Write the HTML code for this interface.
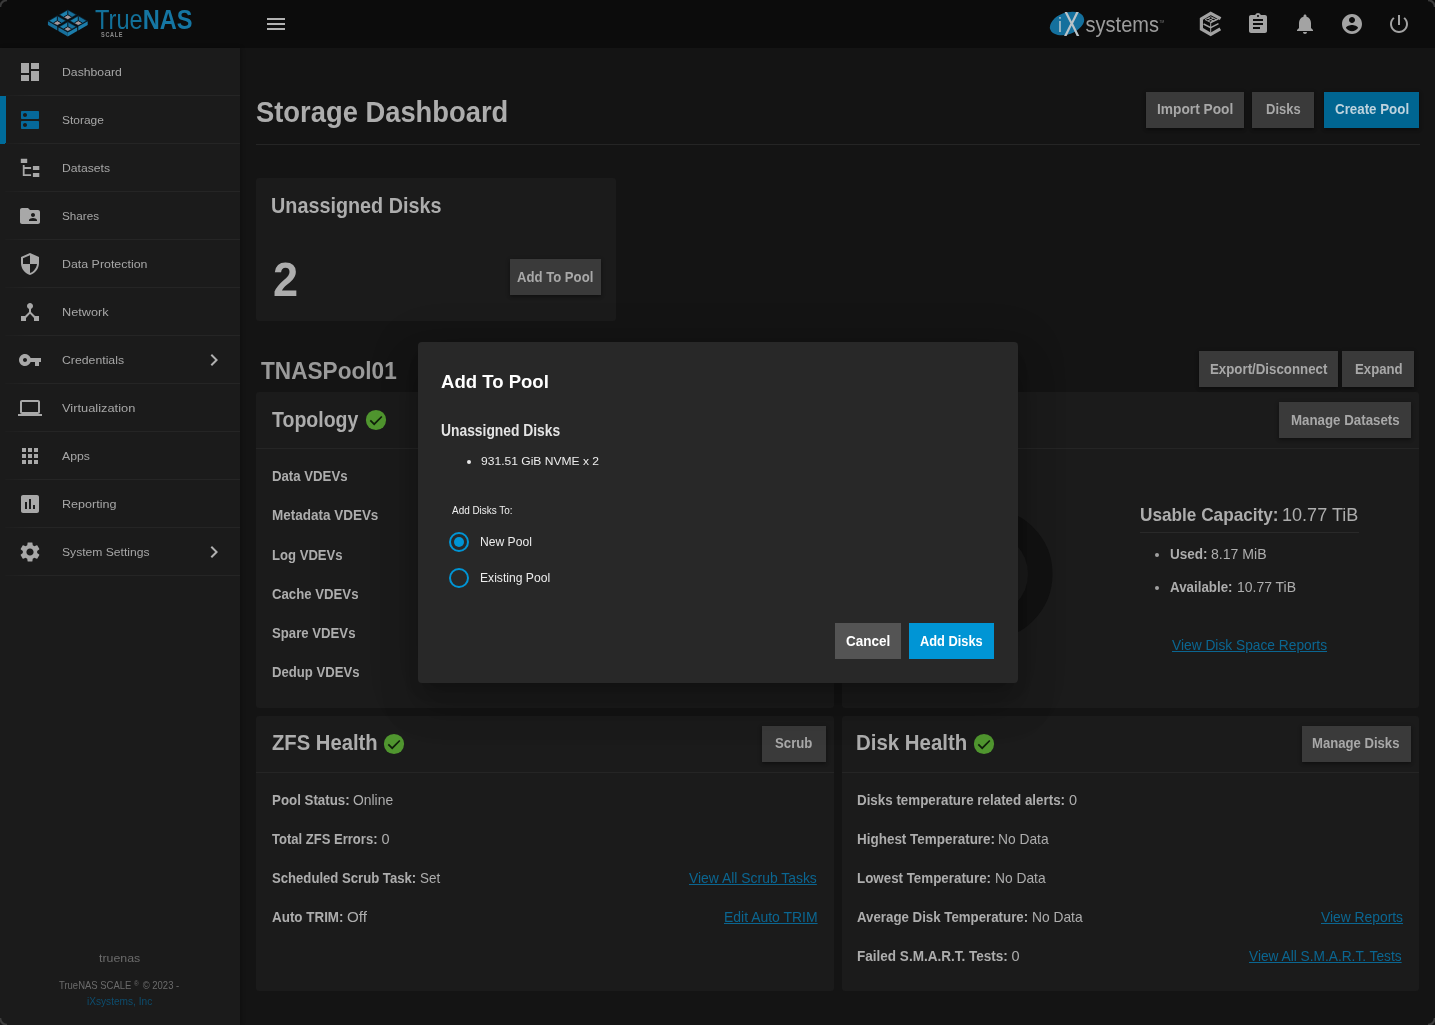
<!DOCTYPE html>
<html lang="en">
<head>
<meta charset="utf-8">
<title>TrueNAS - Storage Dashboard</title>
<style>
*{box-sizing:border-box;margin:0;padding:0}
html,body{width:1435px;height:1025px;overflow:hidden;background:#141414;font-family:"Liberation Sans",sans-serif;color:#adadad}
#app{position:absolute;left:0;top:0;width:1435px;height:1025px;overflow:hidden;will-change:transform;background:#141414}
.abs{position:absolute}
.t{position:absolute;white-space:nowrap;transform-origin:0 50%}
#topbar{position:absolute;left:0;top:0;width:1435px;height:48px;background:#0c0c0c}
#sidebar{position:absolute;left:0;top:48px;width:240px;height:977px;background:#1b1b1b;box-shadow:1px 0 4px rgba(0,0,0,.3)}
.dv{position:absolute;left:5px;width:235px;height:1px;background:linear-gradient(90deg,#1d1d1d,#252525 12%,#252525)}
.card{position:absolute;background:#1b1b1b;border-radius:3px}
.hr{position:absolute;height:1px;background:#252525}
.btn{position:absolute;height:36px;background:#3a3a3a;box-shadow:0 2px 3px rgba(0,0,0,.3),0 1px 5px rgba(0,0,0,.15)}
.btn.pri{background:#006591}
#dialog{position:absolute;left:418px;top:342px;width:600px;height:341px;background:#282828;border-radius:4px;box-shadow:0 11px 15px -7px rgba(0,0,0,.2),0 24px 38px 3px rgba(0,0,0,.14),0 9px 46px 8px rgba(0,0,0,.12)}
.radio{position:absolute;width:20px;height:20px;border:2px solid #0095d5;border-radius:50%}
.radio.on::after{content:"";position:absolute;left:3px;top:3px;width:10px;height:10px;border-radius:50%;background:#0095d5}
.dot{position:absolute;border-radius:50%}
</style>
</head>
<body>
<div id="app">
<div class="hr" style="left:256px;top:144px;width:1164px"></div>
<div class="card" style="left:256px;top:178px;width:360px;height:143px"></div>
<div class="card" style="left:256px;top:392px;width:578px;height:316px"></div>
<div class="card" style="left:842px;top:392px;width:577px;height:316px"></div>
<div class="card" style="left:256px;top:716px;width:578px;height:275px"></div>
<div class="card" style="left:842px;top:716px;width:577px;height:275px"></div>
<div class="hr" style="left:256px;top:448px;width:578px"></div>
<div class="hr" style="left:842px;top:448px;width:577px"></div>
<div class="hr" style="left:256px;top:772px;width:578px"></div>
<div class="hr" style="left:842px;top:772px;width:577px"></div>
<div class="hr" style="left:1140px;top:532px;width:219px;background:#292929"></div>
<svg class="abs" style="left:910px;top:500px" width="150" height="150" viewBox="0 0 150 150"><circle cx="76.5" cy="74" r="53.75" fill="none" stroke="#121212" stroke-width="24.5"/></svg>
<div class="dot" style="left:1155px;top:553px;width:4px;height:4px;background:#a0a0a0"></div>
<div class="dot" style="left:1155px;top:586px;width:4px;height:4px;background:#a0a0a0"></div>
<svg class="abs" style="left:364px;top:408px" width="24" height="24" viewBox="0 0 24 24"><circle cx="12" cy="12" r="10.1" fill="#50962f"/><path d="M6.3 12.3l3.9 3.9 7.6-7.7" fill="none" stroke="#10200a" stroke-width="1.7"/></svg>
<svg class="abs" style="left:382px;top:732px" width="24" height="24" viewBox="0 0 24 24"><circle cx="12" cy="12" r="10.1" fill="#50962f"/><path d="M6.3 12.3l3.9 3.9 7.6-7.7" fill="none" stroke="#10200a" stroke-width="1.7"/></svg>
<svg class="abs" style="left:972px;top:732px" width="24" height="24" viewBox="0 0 24 24"><circle cx="12" cy="12" r="10.1" fill="#50962f"/><path d="M6.3 12.3l3.9 3.9 7.6-7.7" fill="none" stroke="#10200a" stroke-width="1.7"/></svg>
<div class="btn " style="left:1146px;top:92px;width:98px"></div>
<div class="btn " style="left:1252px;top:92px;width:62px"></div>
<div class="btn pri" style="left:1324px;top:92px;width:95px"></div>
<div class="btn " style="left:510px;top:259px;width:91px"></div>
<div class="btn " style="left:1199px;top:351px;width:139px"></div>
<div class="btn " style="left:1342px;top:351px;width:72px"></div>
<div class="btn " style="left:1279px;top:402px;width:132px"></div>
<div class="btn " style="left:762px;top:726px;width:64px"></div>
<div class="btn " style="left:1302px;top:726px;width:109px"></div>
<div id="topbar">
<svg class="abs" style="left:46px;top:6px" width="44" height="34" viewBox="0 0 44 34"><path d="M21.80,3.40 L31.22,8.76 L21.80,14.11 L12.38,8.76 Z" fill="#0b2636"/><path d="M21.80,4.35 L14.05,8.76 L17.92,10.96 L21.80,8.75 Z" fill="#1c80ad"/><path d="M21.80,4.35 L29.55,8.76 L25.68,10.96 L21.80,8.75 Z" fill="#17709c"/><path d="M21.80,8.75 L25.68,10.96 L21.80,13.16 L17.92,10.96 Z" fill="#a3979b"/><path d="M21.80,4.35 L21.80,8.75 L25.68,10.96 M21.80,8.75 L17.92,10.96" stroke="#0a1a24" stroke-width="1" fill="none"/><path d="M11.33,9.35 L20.75,14.71 L11.33,20.06 L1.91,14.71 Z" fill="#0b2636"/><path d="M11.33,10.30 L3.58,14.71 L7.45,16.91 L11.33,14.70 Z" fill="#1c80ad"/><path d="M11.33,10.30 L19.08,14.71 L15.21,16.91 L11.33,14.70 Z" fill="#17709c"/><path d="M11.33,14.70 L15.21,16.91 L11.33,19.11 L7.45,16.91 Z" fill="#a3979b"/><path d="M11.33,10.30 L11.33,14.70 L15.21,16.91 M11.33,14.70 L7.45,16.91" stroke="#0a1a24" stroke-width="1" fill="none"/><path d="M1.91,15.21 L11.33,20.56 L11.33,24.46 L1.91,19.11 Z" fill="#176f9b"/><path d="M32.27,9.35 L41.69,14.71 L32.27,20.06 L22.85,14.71 Z" fill="#0b2636"/><path d="M32.27,10.30 L24.52,14.71 L28.39,16.91 L32.27,14.70 Z" fill="#1c80ad"/><path d="M32.27,10.30 L40.02,14.71 L36.15,16.91 L32.27,14.70 Z" fill="#17709c"/><path d="M32.27,14.70 L36.15,16.91 L32.27,19.11 L28.39,16.91 Z" fill="#a3979b"/><path d="M32.27,10.30 L32.27,14.70 L36.15,16.91 M32.27,14.70 L28.39,16.91" stroke="#0a1a24" stroke-width="1" fill="none"/><path d="M41.69,15.21 L32.27,20.56 L32.27,24.46 L41.69,19.11 Z" fill="#1c7dab"/><path d="M21.80,15.30 L31.22,20.66 L21.80,26.01 L12.38,20.66 Z" fill="#0b2636"/><path d="M21.80,16.25 L14.05,20.66 L17.92,22.86 L21.80,20.65 Z" fill="#1c80ad"/><path d="M21.80,16.25 L29.55,20.66 L25.68,22.86 L21.80,20.65 Z" fill="#17709c"/><path d="M21.80,20.65 L25.68,22.86 L21.80,25.06 L17.92,22.86 Z" fill="#a3979b"/><path d="M21.80,16.25 L21.80,20.65 L25.68,22.86 M21.80,20.65 L17.92,22.86" stroke="#0a1a24" stroke-width="1" fill="none"/><path d="M12.38,21.16 L21.80,26.51 L21.80,30.41 L12.38,25.05 Z" fill="#176f9b"/><path d="M31.22,21.16 L21.80,26.51 L21.80,30.41 L31.22,25.05 Z" fill="#1c7dab"/></svg>
<div class="t" id="tn" style="left:95.2px;top:4.9px;font-size:27px;line-height:30px;color:#127099;transform:scaleX(.874)">True<b style="color:#1576a3">NAS</b></div>
<div class="t" id="sc" style="left:101px;top:31px;font-size:6.5px;line-height:8px;font-weight:bold;color:#8a8a8a;letter-spacing:.8px;transform:scaleX(.855)">SCALE</div>
<svg class="abs" style="left:264px;top:12px" width="24" height="24" viewBox="0 0 24 24" fill="#b2b2b2"><path d="M3 18h18v-2H3v2zm0-5h18v-2H3v2zm0-7v2h18V6H3z"/></svg>
<svg class="abs" style="left:1046px;top:6px" width="122" height="36" viewBox="0 0 122 36"><ellipse cx="21" cy="17.5" rx="17.8" ry="10.8" transform="rotate(-20 21 17.5)" fill="#14709d"/><text x="11.8" y="25.6" font-family="Liberation Sans, sans-serif" font-size="20" fill="#9fb9c6">i</text><text transform="translate(17.6 29.5) scale(.7 1)" font-family="Liberation Sans, sans-serif" font-size="34.9" fill="#b9c3c8">X</text><text x="39.5" y="26.3" font-family="Liberation Sans, sans-serif" font-size="22.8" fill="#9c9c9c" textLength="73.5" lengthAdjust="spacingAndGlyphs">systems</text><text x="113.6" y="16.6" font-family="Liberation Sans, sans-serif" font-size="3" fill="#808080">TM</text></svg>
<svg class="abs" style="left:1199px;top:11px" width="24" height="26" viewBox="0 0 24 26" fill="none" stroke="#a3a3a3"><path d="M21.6 7.7L11.7 2.4 2.4 7.8v10.2l9.3 5.3 9.6-5.5" stroke-width="3.2" stroke-linejoin="miter"/><path d="M11.7 5.8l5.6 2.8-5.6 2.8-5.6-2.8z M8.9 7.2l5.6 2.8 M14.5 7.2l-5.6 2.8 M11.7 11.2v10.4" stroke-width="1"/><path d="M4.6 13l7.1 3.6 7.8-4 M11.7 11.5l7.6-3.6" stroke-width="1.5"/></svg>
<svg class="abs" style="left:1246px;top:12px" width="24" height="24" viewBox="0 0 24 24" fill="#a3a3a3"><path d="M19 3h-4.18C14.4 1.84 13.3 1 12 1c-1.3 0-2.4.84-2.82 2H5c-1.1 0-2 .9-2 2v14c0 1.1.9 2 2 2h14c1.1 0 2-.9 2-2V5c0-1.1-.9-2-2-2zm-7 0c.55 0 1 .45 1 1s-.45 1-1 1-1-.45-1-1 .45-1 1-1zm2 14H7v-2h7v2zm3-4H7v-2h10v2zm0-4H7V7h10v2z"/></svg>
<svg class="abs" style="left:1293px;top:12px" width="24" height="24" viewBox="0 0 24 24" fill="#a3a3a3"><path d="M12 22c1.1 0 2-.9 2-2h-4c0 1.1.89 2 2 2zm6-6v-5c0-3.07-1.64-5.64-4.5-6.32V4c0-.83-.67-1.5-1.5-1.5s-1.5.67-1.5 1.5v.68C7.63 5.36 6 7.92 6 11v5l-2 2v1h16v-1l-2-2z"/></svg>
<svg class="abs" style="left:1340px;top:12px" width="24" height="24" viewBox="0 0 24 24" fill="#a3a3a3"><path d="M12 2C6.48 2 2 6.48 2 12s4.48 10 10 10 10-4.48 10-10S17.52 2 12 2zm0 3c1.66 0 3 1.34 3 3s-1.34 3-3 3-3-1.34-3-3 1.34-3 3-3zm0 14.2c-2.5 0-4.71-1.28-6-3.22.03-1.99 4-3.08 6-3.08 1.99 0 5.97 1.09 6 3.08-1.29 1.94-3.5 3.22-6 3.22z"/></svg>
<svg class="abs" style="left:1387px;top:12px" width="24" height="24" viewBox="0 0 24 24" fill="#a3a3a3"><path d="M13 3h-2v10h2V3zm4.83 2.17l-1.42 1.42C17.99 7.86 19 9.81 19 12c0 3.87-3.13 7-7 7s-7-3.13-7-7c0-2.19 1.01-4.14 2.58-5.42L6.17 5.17C4.23 6.82 3 9.26 3 12c0 4.97 4.03 9 9 9s9-4.03 9-9c0-2.74-1.23-5.18-3.17-6.83z"/></svg>
</div>
<div id="sidebar">
<div class="abs" style="left:0;top:48px;width:6px;height:48px;background:#006c9b"></div>
<svg class="abs" style="left:18px;top:12px" width="24" height="24" viewBox="0 0 24 24" fill="#a8a8a8"><path d="M3 13h8V3H3v10zm0 8h8v-6H3v6zm10 0h8V11h-8v10zm0-18v6h8V3h-8z"/></svg>
<div class="dv" style="top:47px"></div>
<svg class="abs" style="left:18px;top:60px" width="24" height="24" viewBox="0 0 24 24" fill="#06689a"><path d="M20 13H4c-.55 0-1 .45-1 1v6c0 .55.45 1 1 1h16c.55 0 1-.45 1-1v-6c0-.55-.45-1-1-1zM7 19c-1.1 0-2-.9-2-2s.9-2 2-2 2 .9 2 2-.9 2-2 2zM20 3H4c-.55 0-1 .45-1 1v6c0 .55.45 1 1 1h16c.55 0 1-.45 1-1V4c0-.55-.45-1-1-1zM7 9c-1.1 0-2-.9-2-2s.9-2 2-2 2 .9 2 2-.9 2-2 2z"/></svg>
<div class="dv" style="top:95px"></div>
<svg class="abs" style="left:18px;top:108px" width="24" height="24" viewBox="0 0 24 24" fill="#a8a8a8"><path d="M2.8 2.8h6.4v4.3H2.8z M4.8 8.9h1.8v2.2h6.5v1.9H6.6v5.2h6.5v1.9H4.8z M14.9 10h6.4v4h-6.4z M14.9 16.9h6.4v4.2h-6.4z"/></svg>
<div class="dv" style="top:143px"></div>
<svg class="abs" style="left:18px;top:156px" width="24" height="24" viewBox="0 0 24 24" fill="#a8a8a8"><path d="M20 6h-8l-2-2H4c-1.1 0-1.99.9-1.99 2L2 18c0 1.1.9 2 2 2h16c1.1 0 2-.9 2-2V8c0-1.1-.9-2-2-2zm-5 3c1.1 0 2 .9 2 2s-.9 2-2 2-2-.9-2-2 .9-2 2-2zm4 8h-8v-1c0-1.33 2.67-2 4-2s4 .67 4 2v1z"/></svg>
<div class="dv" style="top:191px"></div>
<svg class="abs" style="left:18px;top:204px" width="24" height="24" viewBox="0 0 24 24" fill="#a8a8a8"><path d="M12 1L3 5v6c0 5.55 3.84 10.74 9 12 5.16-1.26 9-6.45 9-12V5l-9-4zm0 10.99h7c-.53 4.12-3.28 7.79-7 8.94V12H5V6.3l7-3.11v8.8z"/></svg>
<div class="dv" style="top:239px"></div>
<svg class="abs" style="left:18px;top:252px" width="24" height="24" viewBox="0 0 24 24" fill="#a8a8a8"><path d="M17 16l-4-4V8.82C14.16 8.4 15 7.3 15 6c0-1.66-1.34-3-3-3S9 4.34 9 6c0 1.3.84 2.4 2 2.82V12l-4 4H3v5h5v-3.05l4-4.2 4 4.2V21h5v-5h-4z"/></svg>
<div class="dv" style="top:287px"></div>
<svg class="abs" style="left:18px;top:300px" width="24" height="24" viewBox="0 0 24 24" fill="#a8a8a8"><path d="M12.65 10C11.83 7.67 9.61 6 7 6c-3.31 0-6 2.69-6 6s2.69 6 6 6c2.61 0 4.83-1.67 5.65-4H17v4h4v-4h2v-4H12.65zM7 14c-1.1 0-2-.9-2-2s.9-2 2-2 2 .9 2 2-.9 2-2 2z"/></svg>
<svg class="abs" style="left:201.5px;top:300px" width="24" height="24" viewBox="0 0 24 24" fill="#b0b0b0"><path d="M10 6L8.59 7.41 13.17 12l-4.58 4.59L10 18l6-6z"/></svg>
<div class="dv" style="top:335px"></div>
<svg class="abs" style="left:18px;top:348px" width="24" height="24" viewBox="0 0 24 24" fill="#a8a8a8"><path d="M20 18c1.1 0 1.99-.9 1.99-2L22 6c0-1.1-.9-2-2-2H4c-1.1 0-2 .9-2 2v10c0 1.1.9 2 2 2H0v2h24v-2h-4zM4 6h16v10H4V6z"/></svg>
<div class="dv" style="top:383px"></div>
<svg class="abs" style="left:18px;top:396px" width="24" height="24" viewBox="0 0 24 24" fill="#a8a8a8"><path d="M4 8h4V4H4v4zm6 12h4v-4h-4v4zm-6 0h4v-4H4v4zm0-6h4v-4H4v4zm6 0h4v-4h-4v4zm6-10v4h4V4h-4zm-6 4h4V4h-4v4zm6 6h4v-4h-4v4zm0 6h4v-4h-4v4z"/></svg>
<div class="dv" style="top:431px"></div>
<svg class="abs" style="left:18px;top:444px" width="24" height="24" viewBox="0 0 24 24" fill="#a8a8a8"><path d="M19 3H5c-1.1 0-2 .9-2 2v14c0 1.1.9 2 2 2h14c1.1 0 2-.9 2-2V5c0-1.1-.9-2-2-2zM9 17H7v-7h2v7zm4 0h-2V7h2v10zm4 0h-2v-4h2v4z"/></svg>
<div class="dv" style="top:479px"></div>
<svg class="abs" style="left:18px;top:492px" width="24" height="24" viewBox="0 0 24 24" fill="#a8a8a8"><path d="M19.14 12.94c.04-.3.06-.61.06-.94 0-.32-.02-.64-.07-.94l2.03-1.58c.18-.14.23-.41.12-.61l-1.92-3.32c-.12-.22-.37-.29-.59-.22l-2.39.96c-.5-.38-1.03-.7-1.62-.94l-.36-2.54c-.04-.24-.24-.41-.48-.41h-3.84c-.24 0-.43.17-.47.41l-.36 2.54c-.59.24-1.13.57-1.62.94l-2.39-.96c-.22-.08-.47 0-.59.22L2.74 8.87c-.12.21-.08.47.12.61l2.03 1.58c-.05.3-.09.63-.09.94s.02.64.07.94l-2.03 1.58c-.18.14-.23.41-.12.61l1.92 3.32c.12.22.37.29.59.22l2.39-.96c.5.38 1.03.7 1.62.94l.36 2.54c.05.24.24.41.48.41h3.84c.24 0 .44-.17.47-.41l.36-2.54c.59-.24 1.13-.56 1.62-.94l2.39.96c.22.08.47 0 .59-.22l1.92-3.32c.12-.22.07-.47-.12-.61l-2.01-1.58zM12 15.6c-1.98 0-3.6-1.62-3.6-3.6s1.62-3.6 3.6-3.6 3.6 1.62 3.6 3.6-1.62 3.6-3.6 3.6z"/></svg>
<svg class="abs" style="left:201.5px;top:492px" width="24" height="24" viewBox="0 0 24 24" fill="#b0b0b0"><path d="M10 6L8.59 7.41 13.17 12l-4.58 4.59L10 18l6-6z"/></svg>
<div class="dv" style="top:527px"></div>
</div>
<span class="t" style="left:61.96px;top:61.95px;font-size:11.7px;line-height:20px;color:#a6a6a6;transform:scaleX(1.0462);">Dashboard</span>
<span class="t" style="left:62.39px;top:109.95px;font-size:11.7px;line-height:20px;color:#a6a6a6;transform:scaleX(1.0207);">Storage</span>
<span class="t" style="left:61.96px;top:157.95px;font-size:11.7px;line-height:20px;color:#a6a6a6;transform:scaleX(1.0418);">Datasets</span>
<span class="t" style="left:62.40px;top:205.95px;font-size:11.7px;line-height:20px;color:#a6a6a6;transform:scaleX(0.9994);">Shares</span>
<span class="t" style="left:61.95px;top:253.95px;font-size:11.7px;line-height:20px;color:#a6a6a6;transform:scaleX(1.0603);">Data Protection</span>
<span class="t" style="left:61.92px;top:301.95px;font-size:11.7px;line-height:20px;color:#a6a6a6;transform:scaleX(1.0889);">Network</span>
<span class="t" style="left:62.38px;top:349.95px;font-size:11.7px;line-height:20px;color:#a6a6a6;transform:scaleX(1.0492);">Credentials</span>
<span class="t" style="left:61.90px;top:397.95px;font-size:11.7px;line-height:20px;color:#a6a6a6;transform:scaleX(1.0989);">Virtualization</span>
<span class="t" style="left:62.00px;top:445.95px;font-size:11.7px;line-height:20px;color:#a6a6a6;transform:scaleX(1.0487);">Apps</span>
<span class="t" style="left:61.93px;top:493.95px;font-size:11.7px;line-height:20px;color:#a6a6a6;transform:scaleX(1.0748);">Reporting</span>
<span class="t" style="left:62.38px;top:541.95px;font-size:11.7px;line-height:20px;color:#a6a6a6;transform:scaleX(1.0372);">System Settings</span>
<span class="t" style="left:99.19px;top:947.98px;font-size:11.6px;line-height:20px;color:#6b6b6b;transform:scaleX(1.0657);">truenas</span>
<span class="t" style="left:59.02px;top:975.73px;font-size:10.3px;line-height:20px;color:#6b6b6b;transform:scaleX(0.9210);">TrueNAS SCALE <span style="font-size:7px;position:relative;top:-2.6px;margin-right:1.4px">®</span> © 2023 -</span>
<span class="t" style="left:87.21px;top:992.43px;font-size:10.3px;line-height:20px;color:#0d4d6e;transform:scaleX(0.9826);">iXsystems, Inc</span>
<span class="t" style="left:255.97px;top:102.14px;font-size:29.6px;line-height:20px;color:#adadad;transform:scaleX(0.9243);font-weight:bold;">Storage Dashboard</span>
<span class="t" style="left:271.21px;top:195.68px;font-size:21.7px;line-height:20px;color:#adadad;transform:scaleX(0.9125);font-weight:bold;">Unassigned Disks</span>
<span class="t" style="left:272.99px;top:268.63px;font-size:48.7px;line-height:20px;color:#adadad;transform:scaleX(0.9281);font-weight:bold;">2</span>
<span class="t" style="left:261.41px;top:360.95px;font-size:24.1px;line-height:20px;color:#9a9a9a;transform:scaleX(0.9387);font-weight:bold;">TNASPool01</span>
<span class="t" style="left:272.22px;top:410.48px;font-size:21.7px;line-height:20px;color:#adadad;transform:scaleX(0.9003);font-weight:bold;">Topology</span>
<span class="t" style="left:271.58px;top:465.98px;font-size:14.5px;line-height:20px;color:#adadad;transform:scaleX(0.9100);font-weight:bold;">Data VDEVs</span>
<span class="t" style="left:271.56px;top:505.18px;font-size:14.5px;line-height:20px;color:#adadad;transform:scaleX(0.9295);font-weight:bold;">Metadata VDEVs</span>
<span class="t" style="left:271.59px;top:544.88px;font-size:14.5px;line-height:20px;color:#adadad;transform:scaleX(0.9037);font-weight:bold;">Log VDEVs</span>
<span class="t" style="left:271.95px;top:583.88px;font-size:14.5px;line-height:20px;color:#adadad;transform:scaleX(0.9092);font-weight:bold;">Cache VDEVs</span>
<span class="t" style="left:272.04px;top:622.98px;font-size:14.5px;line-height:20px;color:#adadad;transform:scaleX(0.9086);font-weight:bold;">Spare VDEVs</span>
<span class="t" style="left:271.59px;top:661.98px;font-size:14.5px;line-height:20px;color:#adadad;transform:scaleX(0.9053);font-weight:bold;">Dedup VDEVs</span>
<span class="t" style="left:1139.58px;top:504.56px;font-size:18.6px;line-height:20px;color:#adadad;transform:scaleX(0.9246);font-weight:bold;">Usable Capacity:</span>
<span class="t" style="left:1282.24px;top:504.56px;font-size:18.6px;line-height:20px;color:#adadad;transform:scaleX(0.9711);">10.77 TiB</span>
<span class="t" style="left:1169.65px;top:543.98px;font-size:14.5px;line-height:20px;color:#adadad;transform:scaleX(0.9330);font-weight:bold;">Used:</span>
<span class="t" style="left:1211.02px;top:543.98px;font-size:14.5px;line-height:20px;color:#adadad;transform:scaleX(0.9723);">8.17 MiB</span>
<span class="t" style="left:1170.12px;top:576.98px;font-size:14.5px;line-height:20px;color:#adadad;transform:scaleX(0.9196);font-weight:bold;">Available:</span>
<span class="t" style="left:1236.94px;top:576.98px;font-size:14.5px;line-height:20px;color:#adadad;transform:scaleX(0.9639);">10.77 TiB</span>
<span class="t" style="left:1172.40px;top:634.98px;font-size:14.5px;line-height:20px;color:#0b6691;transform:scaleX(0.9492);text-decoration:underline">View Disk Space Reports</span>
<span class="t" style="left:271.84px;top:733.48px;font-size:21.7px;line-height:20px;color:#adadad;transform:scaleX(0.9329);font-weight:bold;">ZFS Health</span>
<span class="t" style="left:856.28px;top:733.48px;font-size:21.7px;line-height:20px;color:#adadad;transform:scaleX(0.9418);font-weight:bold;">Disk Health</span>
<span class="t" style="left:271.57px;top:789.98px;font-size:14.5px;line-height:20px;color:#adadad;transform:scaleX(0.9180);font-weight:bold;">Pool Status:</span>
<span class="t" style="left:353.03px;top:789.98px;font-size:14.5px;line-height:20px;color:#adadad;transform:scaleX(0.9571);">Online</span>
<span class="t" style="left:272.31px;top:828.98px;font-size:14.5px;line-height:20px;color:#adadad;transform:scaleX(0.8989);font-weight:bold;">Total ZFS Errors:</span>
<span class="t" style="left:381.50px;top:828.98px;font-size:14.5px;line-height:20px;color:#adadad;transform:scaleX(1.0000);">0</span>
<span class="t" style="left:272.04px;top:867.98px;font-size:14.5px;line-height:20px;color:#adadad;transform:scaleX(0.9051);font-weight:bold;">Scheduled Scrub Task:</span>
<span class="t" style="left:419.84px;top:867.98px;font-size:14.5px;line-height:20px;color:#adadad;transform:scaleX(0.9273);">Set</span>
<span class="t" style="left:272.12px;top:906.98px;font-size:14.5px;line-height:20px;color:#adadad;transform:scaleX(0.9250);font-weight:bold;">Auto TRIM:</span>
<span class="t" style="left:346.97px;top:906.98px;font-size:14.5px;line-height:20px;color:#adadad;transform:scaleX(1.0461);">Off</span>
<span class="t" style="left:689.00px;top:867.98px;font-size:14.5px;line-height:20px;color:#0b6691;transform:scaleX(0.9592);text-decoration:underline">View All Scrub Tasks</span>
<span class="t" style="left:723.94px;top:906.98px;font-size:14.5px;line-height:20px;color:#0b6691;transform:scaleX(0.9622);text-decoration:underline">Edit Auto TRIM</span>
<span class="t" style="left:856.77px;top:789.98px;font-size:14.5px;line-height:20px;color:#adadad;transform:scaleX(0.9220);font-weight:bold;">Disks temperature related alerts:</span>
<span class="t" style="left:1068.90px;top:789.98px;font-size:14.5px;line-height:20px;color:#adadad;transform:scaleX(1.0000);">0</span>
<span class="t" style="left:856.76px;top:828.98px;font-size:14.5px;line-height:20px;color:#adadad;transform:scaleX(0.9280);font-weight:bold;">Highest Temperature:</span>
<span class="t" style="left:998.35px;top:828.98px;font-size:14.5px;line-height:20px;color:#adadad;transform:scaleX(0.9515);">No Data</span>
<span class="t" style="left:856.77px;top:867.98px;font-size:14.5px;line-height:20px;color:#adadad;transform:scaleX(0.9209);font-weight:bold;">Lowest Temperature:</span>
<span class="t" style="left:994.55px;top:867.98px;font-size:14.5px;line-height:20px;color:#adadad;transform:scaleX(0.9515);">No Data</span>
<span class="t" style="left:857.33px;top:906.98px;font-size:14.5px;line-height:20px;color:#adadad;transform:scaleX(0.9151);font-weight:bold;">Average Disk Temperature:</span>
<span class="t" style="left:1031.95px;top:906.98px;font-size:14.5px;line-height:20px;color:#adadad;transform:scaleX(0.9515);">No Data</span>
<span class="t" style="left:856.76px;top:945.98px;font-size:14.5px;line-height:20px;color:#adadad;transform:scaleX(0.9332);font-weight:bold;">Failed S.M.A.R.T. Tests:</span>
<span class="t" style="left:1011.50px;top:945.98px;font-size:14.5px;line-height:20px;color:#adadad;transform:scaleX(1.0000);">0</span>
<span class="t" style="left:1321.00px;top:906.98px;font-size:14.5px;line-height:20px;color:#0b6691;transform:scaleX(0.9542);text-decoration:underline">View Reports</span>
<span class="t" style="left:1249.40px;top:945.98px;font-size:14.5px;line-height:20px;color:#0b6691;transform:scaleX(0.9454);text-decoration:underline">View All S.M.A.R.T. Tests</span>
<span class="t" style="left:1157.15px;top:99.34px;font-size:14.6px;line-height:20px;color:#a8a8a8;transform:scaleX(0.9413);font-weight:bold;">Import Pool</span>
<span class="t" style="left:1266.40px;top:99.34px;font-size:14.6px;line-height:20px;color:#a8a8a8;transform:scaleX(0.8897);font-weight:bold;">Disks</span>
<span class="t" style="left:1334.74px;top:99.34px;font-size:14.6px;line-height:20px;color:#bdd3de;transform:scaleX(0.9137);font-weight:bold;">Create Pool</span>
<span class="t" style="left:517.13px;top:267.34px;font-size:14.6px;line-height:20px;color:#a8a8a8;transform:scaleX(0.8993);font-weight:bold;">Add To Pool</span>
<span class="t" style="left:1209.78px;top:359.04px;font-size:14.6px;line-height:20px;color:#a8a8a8;transform:scaleX(0.9099);font-weight:bold;">Export/Disconnect</span>
<span class="t" style="left:1355.19px;top:359.04px;font-size:14.6px;line-height:20px;color:#a8a8a8;transform:scaleX(0.9035);font-weight:bold;">Expand</span>
<span class="t" style="left:1290.78px;top:410.04px;font-size:14.6px;line-height:20px;color:#a8a8a8;transform:scaleX(0.9112);font-weight:bold;">Manage Datasets</span>
<span class="t" style="left:774.64px;top:733.04px;font-size:14.6px;line-height:20px;color:#a8a8a8;transform:scaleX(0.9046);font-weight:bold;">Scrub</span>
<span class="t" style="left:1312.39px;top:733.04px;font-size:14.6px;line-height:20px;color:#a8a8a8;transform:scaleX(0.8983);font-weight:bold;">Manage Disks</span>
<div id="dialog"></div>
<div class="dot" style="left:467px;top:459.5px;width:4px;height:4px;background:#e8e8e8"></div>
<div class="radio on" style="left:449px;top:532px"></div>
<div class="radio" style="left:449px;top:568px"></div>
<div class="abs" style="left:835px;top:623px;width:66px;height:36px;background:#545454"></div>
<div class="abs" style="left:909px;top:623px;width:85px;height:36px;background:#0095d5"></div>
<span class="t" style="left:441.41px;top:372.42px;font-size:19px;line-height:20px;color:#fff;transform:scaleX(0.9763);font-weight:bold;">Add To Pool</span>
<span class="t" style="left:440.84px;top:419.95px;font-size:16.3px;line-height:20px;color:#e4e4e4;transform:scaleX(0.8499);font-weight:bold;">Unassigned Disks</span>
<span class="t" style="left:481.49px;top:450.91px;font-size:11.8px;line-height:20px;color:#ececec;transform:scaleX(1.0230);">931.51 GiB NVME x 2</span>
<span class="t" style="left:452.00px;top:500.97px;font-size:10.2px;line-height:20px;color:#f0f0f0;transform:scaleX(0.9753);">Add Disks To:</span>
<span class="t" style="left:480.29px;top:531.84px;font-size:12px;line-height:20px;color:#ececec;transform:scaleX(1.0102);">New Pool</span>
<span class="t" style="left:480.29px;top:567.84px;font-size:12px;line-height:20px;color:#ececec;transform:scaleX(1.0103);">Existing Pool</span>
<span class="t" style="left:846.05px;top:630.87px;font-size:14.8px;line-height:20px;color:#fff;transform:scaleX(0.9122);font-weight:bold;">Cancel</span>
<span class="t" style="left:919.74px;top:630.87px;font-size:14.8px;line-height:20px;color:#fff;transform:scaleX(0.8666);font-weight:bold;">Add Disks</span>
<div class="abs" style="left:0;top:0;width:7px;height:7px;background:radial-gradient(circle at 100% 100%,rgba(70,70,70,0) 5.2px,rgba(70,70,70,.8) 6.2px,rgba(70,70,70,.8) 7.2px,rgba(70,70,70,0) 8.5px)"></div>
<div class="abs" style="left:1428px;top:0;width:7px;height:7px;background:radial-gradient(circle at 0 100%,rgba(70,70,70,0) 5.2px,rgba(70,70,70,.8) 6.2px,rgba(70,70,70,.8) 7.2px,rgba(70,70,70,0) 8.5px)"></div>
<div class="abs" style="left:0;top:1018px;width:7px;height:7px;background:radial-gradient(circle at 100% 0,rgba(70,70,70,0) 5.2px,rgba(70,70,70,.8) 6.2px,rgba(70,70,70,.8) 7.2px,rgba(70,70,70,0) 8.5px)"></div>
<div class="abs" style="left:1428px;top:1018px;width:7px;height:7px;background:radial-gradient(circle at 0 0,rgba(70,70,70,0) 5.2px,rgba(70,70,70,.8) 6.2px,rgba(70,70,70,.8) 7.2px,rgba(70,70,70,0) 8.5px)"></div>
</div>
</body>
</html>
